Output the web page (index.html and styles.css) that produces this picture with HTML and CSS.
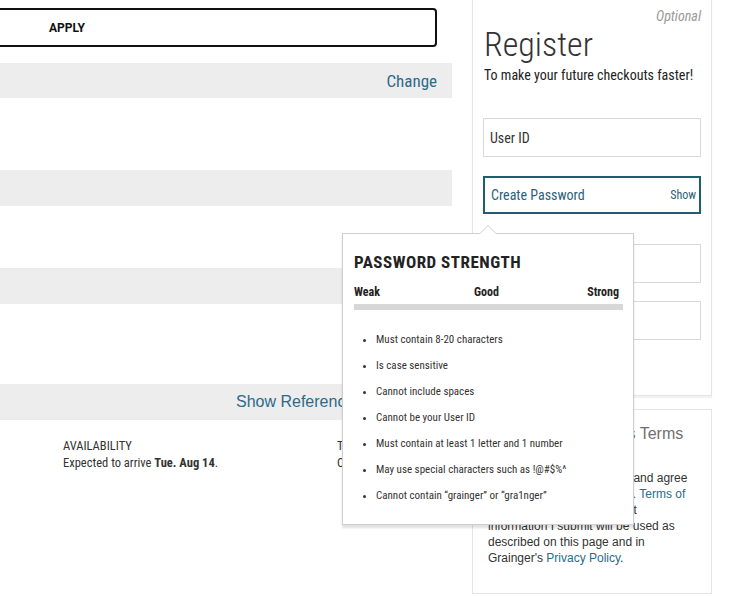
FILE: index.html
```html
<!DOCTYPE html>
<html lang="en">
<head>
  <meta charset="UTF-8">
  <meta name="viewport" content="width=device-width, initial-scale=1.0">
  <title>Checkout</title>
  <link rel="stylesheet" href="styles.css">
</head>
<body>
  <div class="page">
    <main class="checkout">
      <div class="promo">
        <button class="apply">APPLY</button>
      </div>

      <div class="bar"><a class="change" href="#">Change</a></div>
      <div class="gap gap-1"></div>
      <div class="bar bar-2"></div>
      <div class="gap gap-2"></div>
      <div class="bar bar-2"></div>
      <div class="gap gap-3"></div>
      <div class="bar ref"><a class="ref-link" href="#">Show Reference Numbers</a></div>

      <div class="avail-row">
        <div class="avail">
          <div>AVAILABILITY</div>
          <div>Expected to arrive <strong>Tue. Aug 14</strong>.</div>
        </div>
        <div class="total">
          <div>TOTAL</div>
          <div>Calculated</div>
        </div>
      </div>
    </main>

    <aside class="side">
      <section class="register">
        <div class="optional">Optional</div>
        <h2>Register</h2>
        <p class="sub">To make your future checkouts faster!</p>

        <div class="field">User ID</div>
        <div class="field active">
          <span>Create Password</span>
          <span class="show">Show</span>
        </div>
        <div class="field spaced">Confirm Password</div>
        <div class="field">Email</div>
      </section>

      <section class="terms">
        <h3>Agree To Grainger's Terms</h3>
        <p>
          By registering, I consent to and agree<br>
          to Grainger's <a href="#">Terms of Sale. Terms of</a><br>
          <a href="#">Access</a> and understand that<br>
          information I submit will be used as<br>
          described on this page and in<br>
          Grainger's <a href="#">Privacy Policy</a>.
        </p>
      </section>
    </aside>
  </div>

  <div class="strength-pop">
    <h4>PASSWORD STRENGTH</h4>
    <div class="levels">
      <span>Weak</span>
      <span class="good">Good</span>
      <span>Strong</span>
    </div>
    <div class="meter"></div>
    <ul class="rules">
      <li>Must contain 8-20 characters</li>
      <li>Is case sensitive</li>
      <li>Cannot include spaces</li>
      <li>Cannot be your User ID</li>
      <li>Must contain at least 1 letter and 1 number</li>
      <li>May use special characters such as !@#$%^</li>
      <li>Cannot contain “grainger” or “gra1nger”</li>
    </ul>
  </div>
</body>
</html>
```

FILE: styles.css
```css
body {
  margin: 0;
  padding: 0;
  background-color: #fff;
  color: #333;
  font-family: "Roboto Condensed", Roboto, sans-serif;
  font-stretch: 85%;
  overflow: hidden;
}
a {
  color: #2c6a8b;
  text-decoration: none;
}
.page {
  display: flex;
  width: 751px;
  height: 596px;
}

/* left column */
.checkout {
  width: 452px;
  flex-shrink: 0;
}
.promo {
  padding-top: 8px;
}
.apply {
  display: flex;
  align-items: center;
  width: 447px;
  height: 39px;
  margin-left: -10px;
  padding: 0 0 0 57px;
  border: 2px solid #111;
  border-radius: 4px;
  background: #fff;
  font-family: Roboto, sans-serif;
  font-weight: 700;
  font-size: 12px;
  color: #111;
}
.bar {
  display: flex;
  align-items: center;
  justify-content: flex-end;
  height: 35px;
  margin-top: 16px;
  padding-right: 15px;
  background-color: #ededed;
}
.bar-2 {
  height: 36px;
}
.change {
  font-size: 17px;
}
.gap-1 {
  height: 56px;
}
.gap-2 {
  height: 46px;
}
.gap-3 {
  height: 64px;
}
.ref {
  height: 36px;
  justify-content: flex-start;
  padding-left: 236px;
}
.ref-link {
  font-family: "Liberation Sans", Arial, sans-serif;
  font-stretch: normal;
  font-size: 16px;
  white-space: nowrap;
}
.avail-row {
  display: flex;
  padding: 17px 0 0 63px;
  font-size: 12.5px;
  line-height: 17px;
}
.avail {
  width: 274px;
}
.total {
  white-space: nowrap;
}

/* right column */
.side {
  width: 240px;
  margin-left: 20px;
}
.register {
  margin-top: -1px;
  padding: 8px 10px 55px 10px;
  border: 1px solid #e4e4e4;
  box-shadow: 0 2px 1px rgba(0, 0, 0, 0.05);
}
.optional {
  text-align: right;
  font-style: italic;
  font-size: 14px;
  line-height: 16px;
  color: #9a9a9a;
}
.register h2 {
  margin: 0 0 2px 1px;
  font-family: Roboto, sans-serif;
  font-weight: 300;
  font-size: 34px;
  line-height: 40px;
  color: #333;
}
.sub {
  margin: 0 0 34px 1px;
  font-size: 14px;
  line-height: 18px;
  color: #222;
}
.field {
  display: flex;
  align-items: center;
  justify-content: space-between;
  height: 37px;
  margin-bottom: 19px;
  padding: 0 6px;
  border: 1px solid #d8d8d8;
  font-size: 14px;
  color: #333;
}
.field.active {
  height: 34px;
  padding-right: 3px;
  border: 2px solid #1f5c6c;
  color: #2b6179;
}
.field.spaced {
  margin-top: 30px;
  margin-bottom: 18px;
}
.field:last-child {
  margin-bottom: 0;
}
.show {
  font-size: 12px;
  color: #2b5f73;
}
.terms {
  margin-top: 13px;
  height: 169px;
  padding: 14px 0 0 15px;
  border: 1px solid #e4e4e4;
  font-family: "Liberation Sans", Arial, sans-serif;
  font-stretch: normal;
}
.terms h3 {
  margin: 0 0 26px 0;
  text-indent: 6px;
  font-weight: 400;
  font-size: 16px;
  line-height: 20px;
  color: #6f6f6f;
  white-space: nowrap;
}
.terms p {
  margin: 0;
  font-size: 12px;
  line-height: 16px;
  color: #333;
  white-space: nowrap;
}

/* password strength popover */
.strength-pop {
  position: absolute;
  left: 342px;
  top: 233px;
  width: 269px;
  height: 290px;
  padding: 0 10px 0 11px;
  border: 1px solid #cfcfcf;
  background: #fff;
  box-shadow: 0 3px 2px rgba(0, 0, 0, 0.12);
}
.strength-pop::before,
.strength-pop::after {
  content: "";
  position: absolute;
  left: 136px;
  border: 9px solid transparent;
  border-top: 0;
}
.strength-pop::before {
  top: -9px;
  border-bottom: 9px solid #cfcfcf;
}
.strength-pop::after {
  top: -8px;
  border-bottom: 9px solid #fff;
}
.strength-pop h4 {
  margin: 18px 0 0 0;
  font-weight: 700;
  font-size: 17px;
  line-height: 20px;
  letter-spacing: 0.5px;
  color: #222;
}
.levels {
  display: flex;
  justify-content: space-between;
  margin-top: 13px;
  padding-right: 4px;
  font-weight: 700;
  font-size: 12px;
  line-height: 14px;
  color: #222;
}
.good {
  margin-left: 6px;
}
.meter {
  height: 6px;
  margin-top: 5px;
  background-color: #d7d7d7;
}
.rules {
  margin: 23px 0 0 0;
  padding-left: 22px;
  font-size: 11px;
  color: #333;
}
.rules li {
  line-height: 14px;
  margin-bottom: 12px;
}
```
